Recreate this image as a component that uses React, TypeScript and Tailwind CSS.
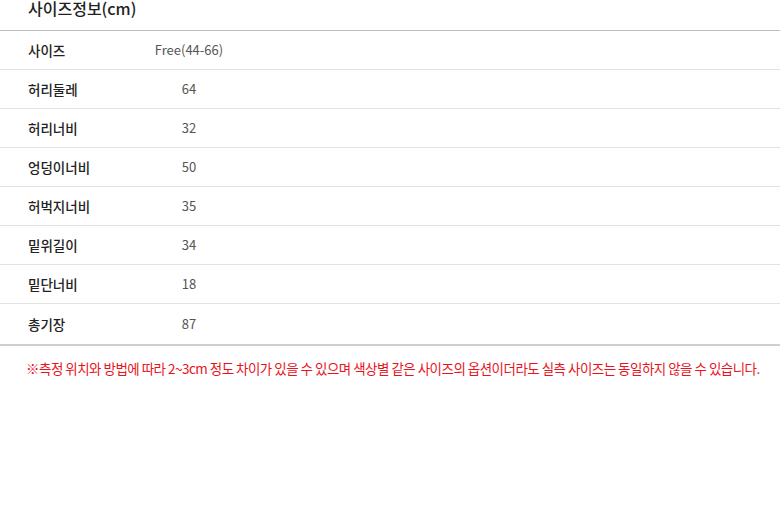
import React from "react";

const rows: [string, string][] = [
  ["사이즈", "Free(44-66)"],
  ["허리둘레", "64"],
  ["허리너비", "32"],
  ["엉덩이너비", "50"],
  ["허벅지너비", "35"],
  ["밑위길이", "34"],
  ["밑단너비", "18"],
  ["총기장", "87"],
];

export default function App() {
  return (
    <div
      className="w-[780px] h-[511px] bg-white overflow-hidden"
      style={{ fontFamily: '"Noto Sans CJK KR", "Noto Sans", sans-serif' }}
    >
      <div className="h-[30px] pl-[28px] text-[16px] font-medium text-[#222] leading-[17px]">
        사이즈정보(cm)
      </div>
      <div className="border-t border-[#bdbdbd]">
        {rows.map(([k, v], i) => (
          <div
            key={k}
            className={
              i === rows.length - 1
                ? "flex items-center h-[42px] border-b-2 border-[#cfcfcf]"
                : "flex items-center h-[39px] border-b border-[#e2e2e2]"
            }
          >
            <div className="w-[150px] pl-[28px] text-[13.5px] font-medium text-[#222]">{k}</div>
            <div className="w-[78px] text-center text-[13px] text-[#555]">{v}</div>
          </div>
        ))}
      </div>
      <div className="pl-[26px] pt-[12px] text-[13.5px] text-[#e8141d] tracking-[-0.52px] whitespace-nowrap">
        ※측정 위치와 방법에 따라 2~3cm 정도 차이가 있을 수 있으며 색상별 같은 사이즈의 옵션이더라도 실측 사이즈는 동일하지 않을 수 있습니다.
      </div>
    </div>
  );
}
